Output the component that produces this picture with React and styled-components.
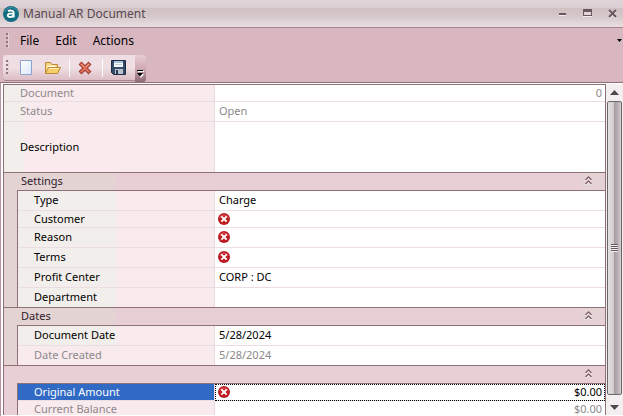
import React, { useState } from "react";
import styled, { createGlobalStyle, css } from "styled-components";

const line = "#8e7077";
const soft = "#ebdde1";

const Global = createGlobalStyle`
  *, *::before, *::after { box-sizing: border-box; }
  body { margin: 0; overflow: hidden; }
  body, button, input, textarea {
    font-family: "Noto Sans", "Open Sans", sans-serif;
    font-size: 11px;
  }
`;

const Window = styled.div`
  display: flex;
  flex-direction: column;
  height: 100vh;
  background: #d9b7c0;
  color: #000;
`;

const TitleBar = styled.header`
  display: flex;
  align-items: center;
  height: 28px;
  flex: none;
  padding: 0 6px 0 3px;
  border-bottom: 1px solid #a48790;
  background: linear-gradient(#e0d4d9 0, #d9ced2 8px, #d0c0c2 8px, #d5c7c9 16px, #e8dce1 26px);
`;

const Title = styled.h1`
  flex: 1;
  margin: 0 0 0 4px;
  padding-top: 1px;
  font-size: 12px;
  font-weight: 400;
  line-height: 20px;
  color: #574850;
`;

const WindowButton = styled.button`
  display: flex;
  align-items: center;
  justify-content: center;
  width: 25px;
  height: 24px;
  padding: 0;
  border: 0;
  background: none;
`;

const WindowButtons = styled.div`
  display: flex;
  margin-right: -8px;
`;

const MenuBar = styled.nav`
  display: flex;
  align-items: center;
  height: 27px;
  flex: none;
  padding: 0 1px 2px 6px;
`;

const Grip = styled.span`
  width: 3px;
  height: 15px;
  flex: none;
  background: repeating-linear-gradient(#917580 0 2px, transparent 2px 4px);
  border-right: 1px solid #e6d0d7;
`;

const MenuItem = styled.button`
  margin-right: 16px;
  padding: 0;
  border: 0;
  background: none;
  font-size: 12px;
  line-height: 16px;

  &:first-of-type { margin-left: 11px; }
`;

const Overflow = styled.button`
  display: flex;
  margin-left: auto;
  padding: 0;
  border: 0;
  background: none;
`;

const ToolRow = styled.div`
  display: flex;
  height: 27px;
  flex: none;
  padding-left: 3px;
`;

const ToolBar = styled.div`
  display: flex;
  align-items: center;
  height: 26px;
  padding-left: 3px;
  border-radius: 3px 0 0 3px;
  border-bottom: 1px solid #a7848e;
  background: linear-gradient(#eedde2, #efdfe3 50%, #dcbcc5);
`;

const ToolButton = styled.button`
  display: flex;
  align-items: center;
  justify-content: center;
  width: 26px;
  height: 24px;
  padding: 0;
  border: 0;
  background: none;

  ${Grip} + & { margin-left: 4px; }
  &:last-child { margin-right: 4px; }
`;

const Divider = styled.span`
  width: 1px;
  height: 18px;
  margin: 0 2px 0 4px;
  background: #fff;
`;

const ToolMore = styled.button`
  display: flex;
  align-items: flex-end;
  justify-content: center;
  width: 11px;
  height: 27px;
  padding: 0 0 4px;
  border: 0;
  border-radius: 0 3px 3px 0;
  background: linear-gradient(#e8ccd4, #cfaab4 50%, #8d6974);
`;

const Body = styled.main`
  display: flex;
  flex: 1;
  min-height: 0;
  padding: 1px 0 1px 1px;
  border-top: 1px solid ${line};
  border-left: 1px solid #b592a0;
  background: #fff;
`;

const Grid = styled.form`
  flex: 1;
  min-width: 0;
  margin-left: 1px;
  overflow: hidden;
  border: 1px solid ${line};
  border-bottom: 0;
  background: #fff;
`;

const SectionHead = styled.button`
  display: flex;
  align-items: center;
  justify-content: space-between;
  width: 100%;
  height: 18px;
  padding: 0 12px 2px 17px;
  border: 0;
  border-top: 1px solid ${line};
  background: ${(p) =>
    p.$plain
      ? "#e7cfd5"
      : "linear-gradient(90deg, #e3d3d3 112px, #e7cfd5 112px calc(100% - 24px), #e4d2d4 calc(100% - 24px))"};
  color: #30202a;
  line-height: 15px;
  text-align: left;
`;

const SectionRows = styled.div`
  padding-left: 13px;
  background: ${(p) => (p.$plain ? "#e7cfd5" : "#e3d3d3")};
`;

const RowList = styled.div`
  border-top: ${(p) => (p.$root ? "0" : `1px solid ${line}`)};
  border-left: ${(p) => (p.$root ? "0" : `1px solid ${line}`)};
`;

const heights = { short: 17, normal: 20, tall: 51 };

const Row = styled.div`
  display: flex;
  height: ${(p) => heights[p.$size]}px;

  & > * { padding-bottom: ${(p) => (p.$size === "normal" ? 2 : 0)}px; }
  &:not(:last-child) > * { border-bottom: 1px solid ${soft}; }
  &:last-child { height: ${(p) => heights[p.$size] - 1}px; }
`;

const Label = styled.label`
  display: flex;
  align-items: center;
  flex: none;
  width: ${(p) => (p.$root ? 211 : 197)}px;
  padding-left: 16px;
  border-right: 1px solid #eed8df;
  line-height: 14px;
  white-space: nowrap;
  background: linear-gradient(
    90deg,
    #f2eeeb ${(p) => p.$tint}px,
    #f9eaed ${(p) => p.$tint}px
  );
  color: ${(p) => (p.$muted ? "#8d898b" : "#000")};
  ${(p) =>
    p.$selected &&
    css`
      background: #316ac5;
      color: #fff;
    `}
`;

const Cell = styled.div`
  display: flex;
  align-items: center;
  flex: 1;
  min-width: 0;
  padding-left: 2px;
  padding-right: 2px;
  background: #fff;
  ${(p) =>
    p.$selected &&
    css`
      outline: 1px dotted #000;
      outline-offset: -1px;
    `}

  & > svg { margin-left: 1px; flex: none; }
`;

const Field = styled.input`
  flex: 1;
  min-width: 0;
  width: 100%;
  height: 14px;
  padding: 0 1px 0 2px;
  border: 0;
  outline: 0;
  background: none;
  line-height: 14px;
  text-align: ${(p) => (p.$right ? "right" : "left")};
  color: ${(p) => (p.$muted ? "#8d898b" : "#000")};
`;

const Memo = styled.textarea`
  flex: 1;
  height: 40px;
  padding: 0 2px;
  border: 0;
  outline: 0;
  resize: none;
`;

const ScrollBar = styled.div`
  display: flex;
  flex-direction: column;
  width: 17px;
  flex: none;
  padding: 0 1px;
  background: #f3eff0;
`;

const ScrollArrow = styled.button`
  display: flex;
  align-items: center;
  justify-content: center;
  height: 17px;
  flex: none;
  padding: 0;
  border: 0;
  background: none;
`;

const ScrollEnd = styled(ScrollArrow)`
  height: 20px;
  padding-top: 4px;
`;

const Thumb = styled.div`
  display: flex;
  align-items: center;
  justify-content: center;
  flex: 1;
  border: 1px solid #6c6669;
  border-radius: 2px;
  background: linear-gradient(90deg, #e3e1e2, #cfcacc 45%, #a89da1 50%, #b5aaae 70%, #d5cccf);
`;

const LogoIcon = () => (
  <svg width="16" height="16" viewBox="0 0 16 16" aria-hidden="true">
    <circle cx="8" cy="8" r="8" fill="#146c82" />
    <path d="M1.5 6a7 7 0 0 1 13 0" fill="none" stroke="#3f91a3" />
    <path d="M5 5.2C6.3 4.2 10.7 4 10.7 6.5V11.5M10.5 7.7H7.2C4 7.7 4 11 7 11C9 11 10.2 10.2 10.5 9" fill="none" stroke="#fff" strokeWidth="1.8" />
  </svg>
);

const MinimizeIcon = () => (
  <svg width="9" height="10" aria-hidden="true">
    <path d="M1 4h7v2H1z" fill="#685960" /><path d="M1 6h7v1H1z" fill="#f5eaee" />
  </svg>
);

const MaximizeIcon = () => (
  <svg width="9" height="10" aria-hidden="true">
    <path d="M0 0h9v7H0z" fill="#685960" /><path d="M1 3h7v3H1z" fill="#e2d5d9" /><path d="M0 7h9v1H0z" fill="#f5eaee" />
  </svg>
);

const CloseIcon = () => (
  <svg width="11" height="10" aria-hidden="true">
    <path d="M2 2l7 7M9 2L2 9" stroke="#f5eaee" strokeWidth="2" />
    <path d="M2 1l7 7M9 1L2 8" stroke="#685960" strokeWidth="2" />
  </svg>
);

const NewIcon = () => (
  <svg width="14" height="16" aria-hidden="true">
    <defs>
      <linearGradient id="paper" x2="1" y2="1"><stop stopColor="#fff" /><stop offset="1" stopColor="#dbe7fb" /></linearGradient>
    </defs>
    <path d="M1.5.5h11v14h-11z" fill="url(#paper)" stroke="#8aa1cd" />
  </svg>
);

const OpenIcon = () => (
  <svg width="17" height="14" viewBox="0 0 17 14" aria-hidden="true">
    <path d="M1.5 12.5v-11h5l1.5 2h5.5v3" fill="#f7d47e" stroke="#b98a38" />
    <path d="M3.5 4.5h8v3h-8z" fill="#fff8de" />
    <path d="M1.5 12.5l3-6h12l-3 6z" fill="#f7ce68" stroke="#b98a38" />
    <path d="M5 7.5h10" stroke="#fff0b8" />
  </svg>
);

const DeleteIcon = () => (
  <svg width="14" height="14" aria-hidden="true">
    <path d="M3.5 3.5l7 7M10.5 3.5l-7 7" stroke="#a03c30" strokeWidth="4.2" strokeLinecap="square" />
    <path d="M3.5 3.5l7 7M10.5 3.5l-7 7" stroke="#e2725c" strokeWidth="2" strokeLinecap="square" />
    <path d="M3 3l3 3M11 3L8 6" stroke="#f4aa97" />
  </svg>
);

const SaveIcon = () => (
  <svg width="15" height="15" aria-hidden="true">
    <path d="M.5.5h14v14h-12l-2-2z" fill="#344b69" stroke="#1d2c42" />
    <path d="M3 1h9v6H3z" fill="#f5f8fb" />
    <path d="M3 1h9v2H3z" fill="#a9c4de" />
    <path d="M4 4.5h7" stroke="#c4ccd5" />
    <path d="M4 9h8v5H4z" fill="#b8c2cc" />
    <path d="M5 10h2v4H5z" fill="#273951" />
  </svg>
);

const MoreIcon = () => (
  <svg width="7" height="8" aria-hidden="true">
    <path d="M1 1h6v1H1zM1 4h6L4 8z" fill="#fff" />
    <path d="M0 0h6v1H0zM0 3h6L3 6.5z" fill="#000" />
  </svg>
);

const DropIcon = () => (
  <svg width="5" height="3" aria-hidden="true"><path d="M0 0h5L2.5 3z" /></svg>
);

const CollapseIcon = () => (
  <svg width="9" height="9" viewBox="0 0 9 9" aria-hidden="true">
    <path d="M1.5 5l3-3 3 3M1.5 9l3-3 3 3" fill="none" stroke="#fff" strokeWidth="1.4" />
    <path d="M1.5 4l3-3 3 3M1.5 8l3-3 3 3" fill="none" stroke="#806069" strokeWidth="1.4" />
  </svg>
);

const ErrorIcon = () => (
  <svg width="12" height="12" viewBox="0 0 12 12" role="img" aria-label="Required">
    <circle cx="6" cy="6" r="6" fill="#bc1b22" />
    <path d="M1.5 5a4.8 4.8 0 0 1 9 0" stroke="#dc5558" fill="none" />
    <path d="M4 4l4 4M8 4L4 8" stroke="#fff" strokeWidth="1.8" strokeLinecap="square" />
  </svg>
);

const ArrowIcon = ({ down }) => (
  <svg width="9" height="5" aria-hidden="true">
    <path d={down ? "M0 0h9L4.5 5z" : "M0 5h9L4.5 0z"} fill="#51464b" />
  </svg>
);

const ThumbGrip = () => (
  <svg width="7" height="8" aria-hidden="true">
    <path d="M0 1.5h7M0 3.5h7M0 5.5h7M0 7.5h7" stroke="#f2edef" />
    <path d="M0 .5h7M0 2.5h7M0 4.5h7M0 6.5h7" stroke="#625a5e" />
  </svg>
);

const general = [
  { id: "document", label: "Document", value: "0", size: "short", muted: true, right: true },
  { id: "status", label: "Status", value: "Open", muted: true },
  { id: "description", label: "Description", value: "", size: "tall", memo: true },
];

const sections = [
  {
    id: "settings",
    title: "Settings",
    tint: 98,
    rows: [
      { id: "type", label: "Type", value: "Charge" },
      { id: "customer", label: "Customer", size: "short", error: true },
      { id: "reason", label: "Reason", error: true },
      { id: "terms", label: "Terms", error: true },
      { id: "profit", label: "Profit Center", value: "CORP : DC" },
      { id: "department", label: "Department" },
    ],
  },
  {
    id: "dates",
    title: "Dates",
    tint: 98,
    rows: [
      { id: "docdate", label: "Document Date", value: "5/28/2024" },
      { id: "created", label: "Date Created", value: "5/28/2024", muted: true, tint: 0 },
    ],
  },
  {
    id: "amounts",
    title: "",
    tint: 0,
    rows: [
      { id: "original", label: "Original Amount", value: "$0.00", size: "short", error: true, right: true, selected: true },
      { id: "balance", label: "Current Balance", value: "$0.00", size: "short", muted: true, right: true },
    ],
  },
];

function Property({ row, tint, root }) {
  return (
    <Row $size={row.size || "normal"}>
      <Label htmlFor={row.id} $root={root} $tint={row.tint ?? tint} $muted={row.muted} $selected={row.selected}>
        {row.label}
      </Label>
      <Cell $selected={row.selected}>
        {row.error && <ErrorIcon />}
        {row.memo ? (
          <Memo id={row.id} defaultValue={row.value} />
        ) : (
          <Field id={row.id} type="text" defaultValue={row.value} readOnly={row.muted} $muted={row.muted} $right={row.right} />
        )}
      </Cell>
    </Row>
  );
}

function Section({ section }) {
  const [open, setOpen] = useState(true);
  const plain = !section.title;
  return (
    <section>
      <SectionHead
        type="button"
        $plain={plain}
        aria-expanded={open}
        aria-label={section.title || "Amounts"}
        onClick={() => setOpen(!open)}
      >
        <span>{section.title}</span>
        <CollapseIcon />
      </SectionHead>
      {open && (
        <SectionRows $plain={plain}>
          <RowList>
            {section.rows.map((row) => (
              <Property key={row.id} row={row} tint={section.tint} />
            ))}
          </RowList>
        </SectionRows>
      )}
    </section>
  );
}

export default function App() {
  return (
    <Window>
      <Global />
      <TitleBar>
        <LogoIcon />
        <Title>Manual AR Document</Title>
        <WindowButtons>
          <WindowButton aria-label="Minimize"><MinimizeIcon /></WindowButton>
          <WindowButton aria-label="Maximize"><MaximizeIcon /></WindowButton>
          <WindowButton aria-label="Close"><CloseIcon /></WindowButton>
        </WindowButtons>
      </TitleBar>
      <MenuBar>
        <Grip />
        <MenuItem>File</MenuItem>
        <MenuItem>Edit</MenuItem>
        <MenuItem>Actions</MenuItem>
        <Overflow aria-label="More menus"><DropIcon /></Overflow>
      </MenuBar>
      <ToolRow>
        <ToolBar role="toolbar">
          <Grip />
          <ToolButton aria-label="New"><NewIcon /></ToolButton>
          <ToolButton aria-label="Open"><OpenIcon /></ToolButton>
          <Divider />
          <ToolButton aria-label="Delete"><DeleteIcon /></ToolButton>
          <Divider />
          <ToolButton aria-label="Save"><SaveIcon /></ToolButton>
        </ToolBar>
        <ToolMore aria-label="Toolbar options"><MoreIcon /></ToolMore>
      </ToolRow>
      <Body>
        <Grid>
          <RowList $root>
            {general.map((row) => (
              <Property key={row.id} row={row} tint={20} root />
            ))}
          </RowList>
          {sections.map((section) => (
            <Section key={section.id} section={section} />
          ))}
        </Grid>
        <ScrollBar>
          <ScrollArrow aria-label="Scroll up"><ArrowIcon /></ScrollArrow>
          <Thumb><ThumbGrip /></Thumb>
          <ScrollEnd aria-label="Scroll down"><ArrowIcon down /></ScrollEnd>
        </ScrollBar>
      </Body>
    </Window>
  );
}
